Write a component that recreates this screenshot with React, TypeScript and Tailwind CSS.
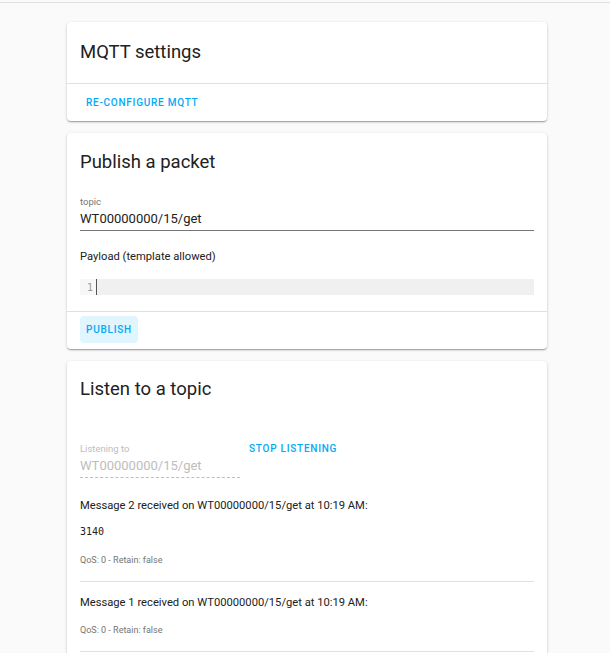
import React from 'react';

const font = { fontFamily: 'Roboto, "Liberation Sans", sans-serif' };

const Card: React.FC<{ children: React.ReactNode }> = ({ children }) => (
    <div className="bg-white rounded-[4px] shadow-[0_1px_3px_rgba(0,0,0,0.2),0_1px_1px_rgba(0,0,0,0.14),0_2px_1px_-1px_rgba(0,0,0,0.12)]">
        {children}
    </div>
);

const Message: React.FC<{ n: number; payload?: string }> = ({ n, payload }) => (
    <div className="border-b border-[#e0e0e0]">
        <div className="pt-[14px] text-[11.2px] leading-[14px] text-[#212121]">
            Message {n} received on WT00000000/15/get at 10:19 AM:
        </div>
        {payload ? (
            <>
                <div className="mt-[12px] text-[10px] leading-[14px] text-[#212121] font-['DejaVu_Sans_Mono',monospace]">{payload}</div>
                <div className="mt-[15px] pb-[15px] text-[9px] leading-[12px] text-[#757575]">QoS: 0 - Retain: false</div>
            </>
        ) : (
            <div className="mt-[14px] pb-[15px] text-[9px] leading-[12px] text-[#757575]">QoS: 0 - Retain: false</div>
        )}
    </div>
);

const App: React.FC = () => {
    return (
        <div className="min-h-[653px] bg-[#fafafa]" style={font}>
            <div className="h-[3px] border-b border-[#e0e0e0]" />
            <div className="ml-[67px] w-[480px] pt-[19px] pb-[16px] flex flex-col gap-[12px]">
                {/* MQTT settings */}
                <Card>
                    <div className="h-[62px] px-[13px] flex items-center border-b border-[#e0e0e0]">
                        <h2 className="text-[18.5px] text-[#212121]">MQTT settings</h2>
                    </div>
                    <div className="h-[37px] px-[13px] flex items-center">
                        <button className="px-[6px] text-[10px] font-medium tracking-[0.075em] text-[#03a9f4]">RE-CONFIGURE MQTT</button>
                    </div>
                </Card>

                {/* Publish a packet */}
                <Card>
                    <div className="px-[13px] pt-[17px]">
                        <h2 className="text-[18.5px] leading-[24px] text-[#212121]">Publish a packet</h2>
                        <div className="mt-[22px] text-[9.5px] leading-[12px] text-[#757575]">topic</div>
                        <div className="h-[23px] flex items-center text-[13px] text-[#212121] border-b border-[#757575]">WT00000000/15/get</div>
                        <div className="mt-[19px] text-[11.2px] leading-[14px] text-[#212121]">Payload (template allowed)</div>
                        <div className="mt-[15px] flex h-[16px]">
                            <div className="w-[16px] bg-[#f7f7f7] text-[10px] text-[#999] flex items-center justify-end pr-[3px] font-['DejaVu_Sans_Mono',monospace]">1</div>
                            <div className="flex-1 bg-[#f0f0f0] border-l border-[#555]" />
                        </div>
                    </div>
                    <div className="mt-[16px] border-t border-[#e0e0e0] px-[13px] pt-[4px] pb-[6px]">
                        <button className="h-[27px] px-[6px] rounded-[4px] bg-[#e1f5fe] text-[10px] font-medium tracking-[0.075em] text-[#03a9f4]">PUBLISH</button>
                    </div>
                </Card>

                {/* Listen to a topic */}
                <Card>
                    <div className="px-[13px] pt-[16px] pb-[16px]">
                        <h2 className="text-[18.5px] leading-[24px] text-[#212121]">Listen to a topic</h2>
                        <div className="mt-[42px] flex items-start">
                            <div className="w-[160px]">
                                <div className="text-[9.5px] leading-[12px] text-[#bdbdbd]">Listening to</div>
                                <div className="h-[23px] flex items-center text-[13px] text-[#bdbdbd] border-b border-dashed border-[#bdbdbd]">WT00000000/15/get</div>
                            </div>
                            <button className="ml-[3px] px-[6px] text-[10px] leading-[12px] font-medium tracking-[0.075em] text-[#03a9f4]">STOP LISTENING</button>
                        </div>
                        <div className="mt-[7px]">
                            <Message n={2} payload="3140" />
                            <Message n={1} />
                        </div>
                    </div>
                </Card>
            </div>
        </div>
    );
};

export default App;
